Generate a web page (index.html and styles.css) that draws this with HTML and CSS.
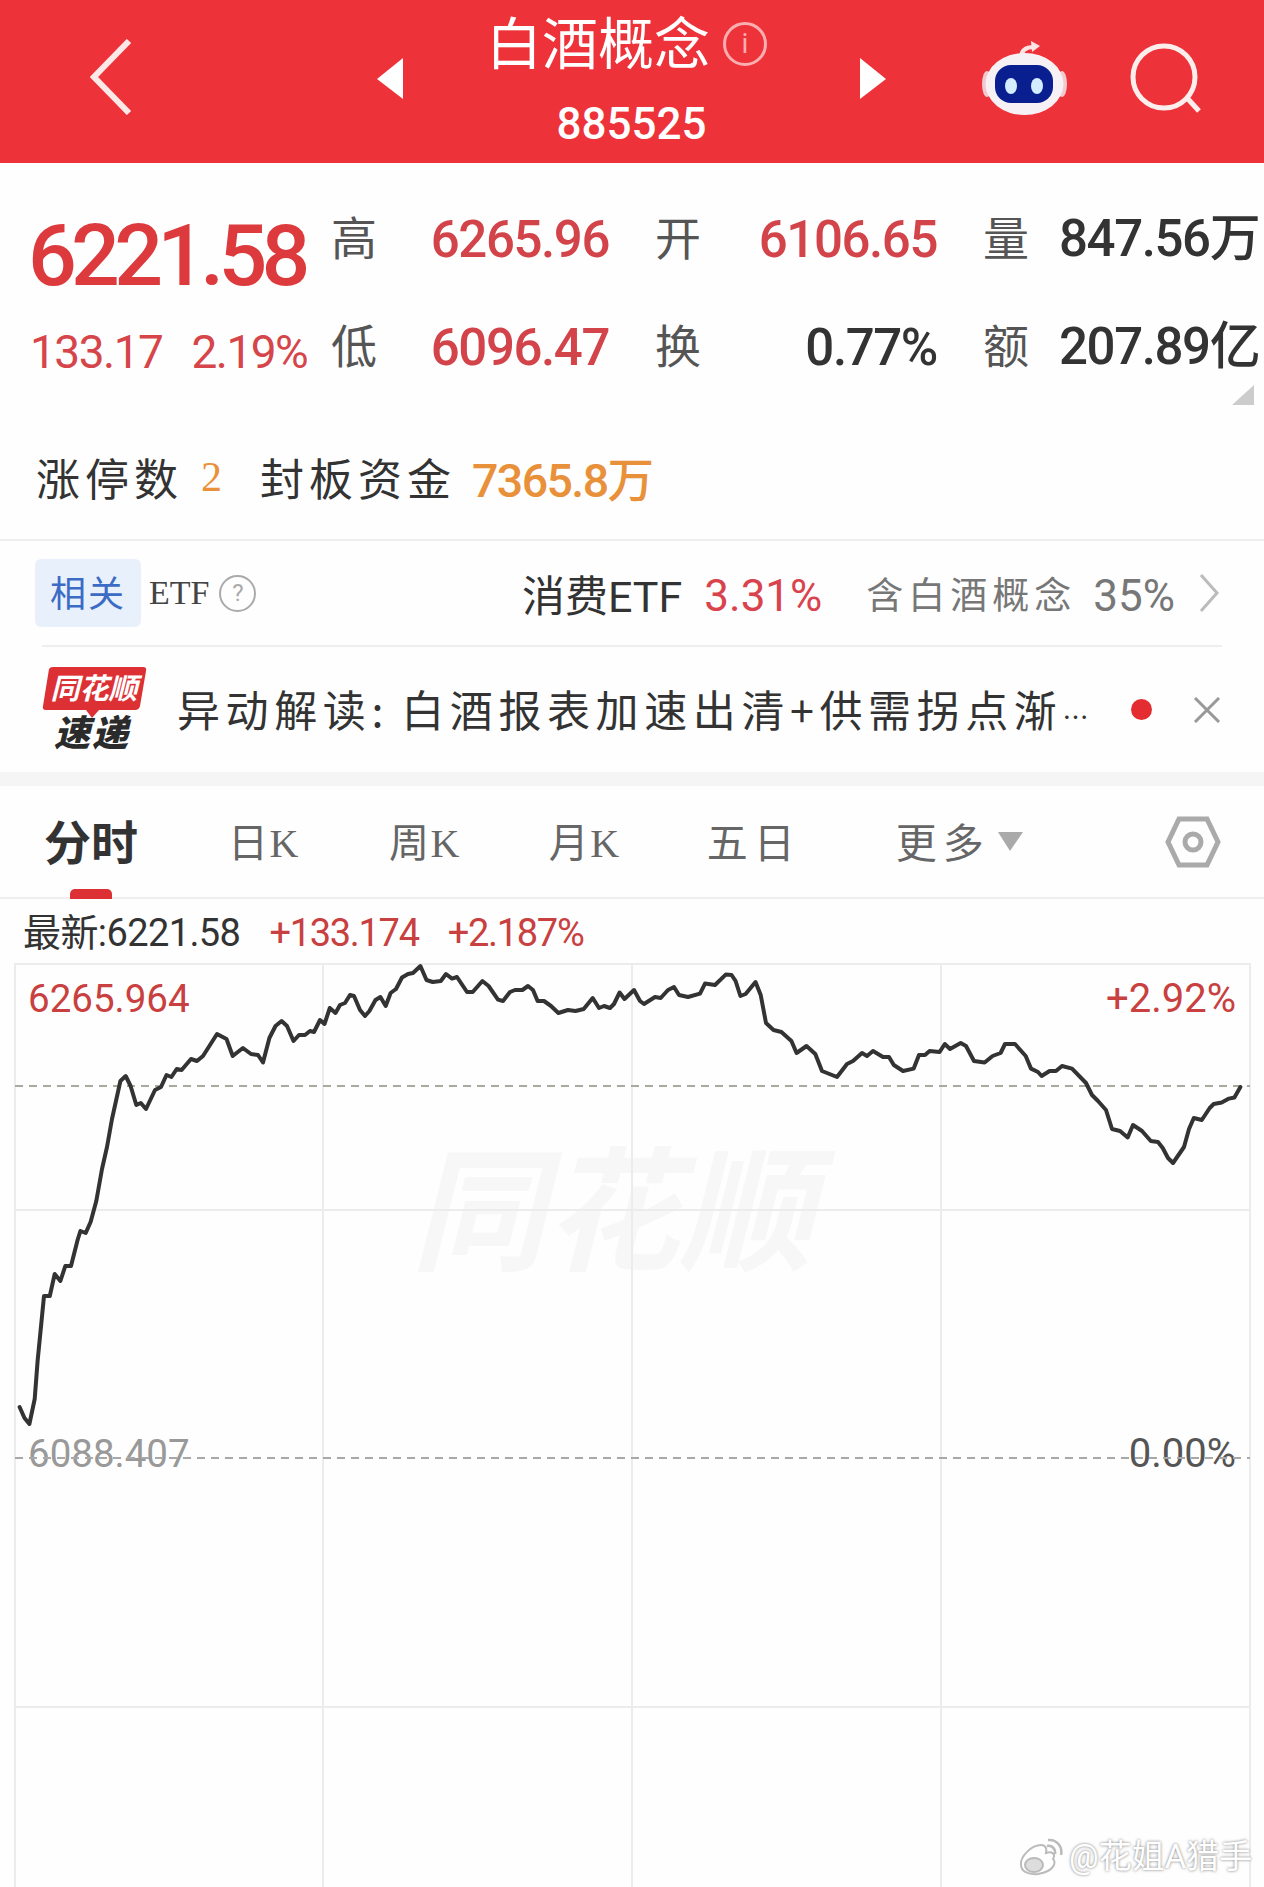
FILE: index.html
```html
<!DOCTYPE html>
<html lang="zh-CN">
<head>
    <meta charset="UTF-8">
    <meta name="viewport" content="width=device-width, initial-scale=1.0">
    <title>白酒概念 885525</title>
    <link rel="stylesheet" href="styles.css">
</head>
<body>
    <header class="topbar">
        <svg class="back" viewBox="0 0 42 76"><path d="M39 2 L4 38 L39 74" /></svg>
        <svg class="arrow arrow-prev" viewBox="0 0 26 41"><polygon points="26,0 0,21 26,41" /></svg>
        <div class="title-block">
            <div class="title-row">
                <span class="title">白酒概念</span>
                <span class="info">i</span>
            </div>
            <div class="code">885525</div>
        </div>
        <svg class="arrow arrow-next" viewBox="0 0 26 41"><polygon points="0,0 26,21 0,41" /></svg>
        <svg class="robot" viewBox="0 0 85 75">
            <path class="robot-antenna" d="M39 17 C39 9 44 6 52 6" />
            <polygon points="49,0 58,5 50,11" fill="#fde4e4" />
            <ellipse cx="5" cy="43" rx="5" ry="13" fill="#f2c9cf" />
            <ellipse cx="80" cy="43" rx="5" ry="13" fill="#f2c9cf" />
            <ellipse cx="42.500" cy="43" rx="39" ry="31" fill="#f6f1f4" />
            <rect x="13" y="24" width="58" height="38" rx="16" fill="#0a1f8f" />
            <ellipse cx="29" cy="45" rx="6" ry="8" fill="#d3ecff" />
            <ellipse cx="55" cy="45" rx="6" ry="8" fill="#d3ecff" />
        </svg>
        <svg class="search" viewBox="0 0 72 72">
            <circle cx="34" cy="34" r="31" />
            <path d="M58 56 L69 68" />
        </svg>
    </header>

    <section class="stats">
        <div class="quote">
            <div class="price">6221.58</div>
            <div class="change"><span>133.17</span><span>2.19%</span></div>
        </div>
        <div class="stat-grid">
            <span class="stat-label">高</span>
            <span class="stat-val red">6265.96</span>
            <span class="stat-label pad">开</span>
            <span class="stat-val red">6106.65</span>
            <span class="stat-label pad">量</span>
            <span class="stat-val end">847.56万</span>
            <span class="stat-label">低</span>
            <span class="stat-val red">6096.47</span>
            <span class="stat-label pad">换</span>
            <span class="stat-val">0.77%</span>
            <span class="stat-label pad">额</span>
            <span class="stat-val end">207.89亿</span>
        </div>
        <div class="corner"></div>
    </section>

    <section class="limit-row">
        <span class="limit-label">涨停数</span>
        <span class="limit-count">2</span>
        <span class="limit-label limit-fund">封板资金</span>
        <span class="limit-money">7365.8万</span>
    </section>

    <section class="etf-row">
        <span class="tag">相关</span>
        <span class="etf-name">ETF</span>
        <span class="help">?</span>
        <span class="etf-fund">消费ETF</span>
        <span class="etf-pct">3.31%</span>
        <span class="etf-note">含白酒概念</span>
        <span class="etf-share">35%</span>
        <svg class="chevron" viewBox="0 0 22 40"><path d="M3 2 L19 20 L3 38" /></svg>
    </section>

    <section class="news-row">
        <svg class="news-logo" viewBox="0 0 105 92">
            <path d="M7 3 Q8 1 11 1 L101 1 Q105 1 104 5 L98 40 Q97 44 93 44 L57 44 L50 52 L44 44 L4 44 Q0 44 1 40 Z" fill="#dc3035" />
            <text class="logo-top" x="52" y="33" text-anchor="middle">同花顺</text>
            <text class="logo-bottom" x="50" y="80" text-anchor="middle">速递</text>
        </svg>
        <div class="news-text">异动解读: 白酒报表加速出清+供需拐点渐<span class="news-more">…</span></div>
        <span class="news-dot"></span>
        <svg class="news-close" viewBox="0 0 28 26"><path d="M2 1 L26 25 M26 1 L2 25" /></svg>
    </section>

    <div class="gap"></div>

    <nav class="tabs">
        <span class="tab active">分时</span>
        <span class="tab tab-day">日<i>K</i></span>
        <span class="tab tab-week">周<i>K</i></span>
        <span class="tab tab-month">月<i>K</i></span>
        <span class="tab tab-five">五日</span>
        <span class="tab tab-more">更多</span>
        <svg class="more-arrow" viewBox="0 0 25 19"><polygon points="0,0 25,0 12,19" /></svg>
        <svg class="hex" viewBox="0 0 56 52">
            <polygon points="14,3 42,3 53,26 42,49 14,49 3,26" />
            <circle cx="28" cy="26" r="8" />
        </svg>
    </nav>

    <div class="latest">
        <span class="latest-now">最新:6221.58</span>
        <span class="latest-up">+133.174</span>
        <span class="latest-pct">+2.187%</span>
    </div>

    <section class="chart">
        <div class="watermark">同花顺</div>
        <span class="axis axis-high">6265.964</span>
        <span class="axis axis-pct axis-high-pct">+2.92%</span>
        <span class="axis axis-base">6088.407</span>
        <span class="axis axis-pct axis-base-pct">0.00%</span>
        <svg class="plot" viewBox="0 963 1264 924">
            <g class="grid">
                <path d="M15 963 V1887 M323 963 V1887 M632 963 V1887 M941 963 V1887 M1250 963 V1887" />
                <path d="M15 964 H1250 M15 1210 H1250 M15 1707 H1250" />
            </g>
            <path class="dash dash-high" d="M15 1086 H1250" />
            <path class="dash dash-base" d="M15 1458 H1250" />
            <polyline class="price-line" points="19.6,1407 24.5,1418 29.4,1424 34.7,1399 37.6,1361 44,1296 49.8,1296 54.7,1274 60.4,1281 65.3,1266 71,1266 77.6,1240 80.4,1231 85.7,1233 90.6,1222 96.3,1201 102,1169 107,1147 112,1119 120.4,1081 125.7,1076 130.6,1086 136.3,1105 140.8,1103 146,1109 155,1090 161,1087 166.5,1075 171.4,1077 176.7,1069 181.6,1070 191,1059 197,1061 203,1056 217,1034 226.5,1039 232.7,1056 242.9,1048 251,1054 258,1055 263,1062.5 269.4,1038 275.5,1026 281.6,1021 287,1026 293.5,1041 299,1035 305,1035 310,1031 314,1032 320,1020 324.5,1024 329.8,1008 335.5,1013 340,1005 345,1003 350,995 354,996 360,1010 365,1016 369.4,1011 375.5,1000 380.4,997 385.7,1006 390.6,993 396,989 402,977.5 408,974 413,973 420.4,966 426.5,980 432.7,982 440.8,981 446,974 452,978.6 457,977 467,992 472.7,992 482.4,981 488.6,986 498,999.6 503,1001 510,992 515,990 522.4,990 528,986 533,990 537.6,1001 544,1001 551,1006 558.4,1013 568,1010 575.5,1011 583.7,1009 592.7,998 599,1008 604,1006 610,1008 614,1004 619.6,992.5 624.5,999 634,990 640,1001 644,1004 655,997 660.7,998 668,990 674,987 679,995 688,997 700,993.6 705,983.6 715,985 725.7,974.6 731.6,975 735.6,981 740.4,996 745.6,994 755.5,982 760.7,995 766,1023 773.5,1030 781.4,1032 791.4,1041 796.6,1053 806.5,1046 815.3,1054 822,1071 837,1077 847,1064 853,1061 862,1053 867,1056 873,1051 883,1057 889,1057 893.8,1065 903,1071 913.7,1068.6 919,1055 925,1055 929.6,1051 939.6,1052 944.8,1044 950,1049 960.7,1043 966,1046 974,1061 984.6,1062.5 992.6,1056 1000.6,1053 1005,1044 1015,1044 1025.7,1056 1031,1068.6 1038,1072 1041.6,1076 1049.6,1071 1056,1071 1062,1066 1072,1068.6 1086,1083 1092,1095 1098,1101 1106,1110 1112,1129 1120,1131 1127.7,1137.5 1133,1125 1142,1131 1150.8,1141 1158,1142 1162.7,1148 1168,1158 1173,1163 1184,1147 1189,1129 1193.8,1118 1201.8,1120 1209.7,1108 1213.7,1104 1221.7,1102.5 1229,1098.6 1234.4,1097.5 1240.4,1087" />
        </svg>
        <div class="credit">
            <svg class="weibo" viewBox="0 0 46 38">
                <path class="weibo-body" d="M3 27 C2 18 14 7 23 7 C28 7 29 11 28 15 C34 13 38 16 35 21 C38 23 38 33 20 36 C10 37 3 33 3 27 Z" />
                <ellipse class="weibo-eye" cx="16" cy="27" rx="9" ry="7" />
                <path class="weibo-wave" d="M29 8 C34 7 38 11 37 16 M30 2 C38 1 45 8 43 17" />
            </svg>
            <span class="credit-name">@花姐A猎手</span>
        </div>
    </section>
</body>
</html>
```

FILE: styles.css
```css
* {
    box-sizing: border-box;
}
body {
    margin: 0;
    width: 1264px;
    height: 1887px;
    overflow: hidden;
    background: #fefefe;
    color: #333;
    font-family: Roboto, "Noto Sans CJK SC", sans-serif;
}

/* top bar */
.topbar {
    display: flex;
    align-items: center;
    height: 163px;
    padding: 0 0 6px 90px;
    background: #ee3239;
    color: #fff;
}
.back {
    width: 42px;
    height: 76px;
    margin-top: -4px;
    fill: none;
    stroke: #fde8e8;
    stroke-width: 6;
}
.arrow {
    width: 26px;
    height: 41px;
    fill: #fff;
}
.arrow-prev {
    margin-left: 245px;
}
.title-block {
    align-self: flex-start;
    width: 457px;
    padding-top: 15px;
    text-align: center;
}
.title-row {
    display: flex;
    justify-content: center;
    align-items: center;
    height: 60px;
    padding-right: 10px;
}
.title {
    font-size: 56px;
    line-height: 60px;
}
.info {
    width: 44px;
    height: 44px;
    margin: -3px 0 0 13px;
    border: 3px solid #f9aeb0;
    border-radius: 50%;
    color: #f9aeb0;
    font-size: 28px;
    line-height: 38px;
    text-align: center;
}
.code {
    margin-top: 26px;
    font-size: 44px;
    line-height: 46px;
    font-weight: 500;
}
.robot {
    width: 85px;
    height: 75px;
    margin-left: 96px;
}
.robot-antenna {
    fill: none;
    stroke: #fde4e4;
    stroke-width: 4;
}
.search {
    width: 72px;
    height: 72px;
    margin-left: 63px;
    fill: none;
    stroke: #fdeeee;
    stroke-width: 5;
}

/* quote block */
.stats {
    display: flex;
    position: relative;
    height: 241px;
    padding: 23px 0 0 28px;
}
.quote {
    flex: none;
    width: 303px;
    padding-top: 28px;
    color: #dd3a3e;
}
.price {
    font-size: 86px;
    line-height: 84px;
    letter-spacing: -5.800px;
    font-weight: 500;
}
.change {
    display: flex;
    gap: 29px;
    padding: 0 0 0 2px;
    font-size: 46px;
    line-height: 108px;
    letter-spacing: -1.500px;
    color: #d5454a;
}
.stat-grid {
    display: grid;
    grid-template-columns: 46px 232px 94px 234px 93px 238px;
    grid-auto-rows: 108px;
    align-items: center;
}
.stat-label {
    font-size: 46px;
    line-height: 60px;
    margin-top: -3px;
    color: #555;
}
.stat-label.pad {
    padding-left: 46px;
}
.stat-val {
    font-size: 51px;
    line-height: 60px;
    letter-spacing: -1.400px;
    font-weight: 500;
    color: #333;
    text-align: right;
    white-space: nowrap;
}
.stat-val.red {
    color: #d2434a;
}
.stat-val.end {
    padding-left: 29px;
    margin-top: -3px;
    text-align: left;
}
.corner {
    position: absolute;
    right: 10px;
    top: 222px;
    border-style: solid;
    border-width: 0 0 20px 22px;
    border-color: transparent transparent #ccc transparent;
}

/* limit up row */
.limit-row {
    display: flex;
    align-items: center;
    height: 137px;
    padding: 10px 0 0 36px;
    border-bottom: 2px solid #eee;
}
.limit-label {
    font-size: 44px;
    letter-spacing: 5px;
    color: #333;
}
.limit-count {
    margin-left: 18px;
    font-family: "Liberation Serif", serif;
    font-size: 42px;
    color: #e8913a;
}
.limit-fund {
    margin-left: 38px;
}
.limit-money {
    margin-left: 16px;
    font-size: 46.500px;
    letter-spacing: -1.600px;
    font-weight: 500;
    color: #e8913a;
}

/* etf row */
.etf-row {
    display: flex;
    align-items: center;
    height: 106px;
    margin: 0 42px;
    border-bottom: 2px solid #eee;
}
.tag {
    width: 106px;
    height: 68px;
    margin-left: -7px;
    border-radius: 6px;
    background: #e8f0fc;
    color: #3b6bc4;
    font-size: 36px;
    line-height: 72px;
    letter-spacing: 2px;
    text-align: center;
}
.etf-name {
    margin-left: 8px;
    font-family: "Liberation Serif", serif;
    font-size: 34px;
    color: #444;
}
.help {
    width: 37px;
    height: 37px;
    margin-left: 10px;
    border: 2px solid #aaa;
    border-radius: 50%;
    color: #aaa;
    font-size: 24px;
    line-height: 33px;
    text-align: center;
}
.etf-fund {
    margin-left: auto;
    font-size: 43px;
    color: #333;
}
.etf-pct {
    margin: 6px 0 0 22px;
    font-size: 44px;
    color: #d9434e;
}
.etf-note {
    margin-left: 44px;
    font-size: 37px;
    letter-spacing: 5px;
    color: #777;
}
.etf-share {
    margin: 6px 0 0 17px;
    font-size: 44px;
    color: #777;
}
.chevron {
    width: 22px;
    height: 40px;
    margin: 0 2px 0 23px;
    fill: none;
    stroke: #bbb;
    stroke-width: 3;
}

/* news row */
.news-row {
    display: flex;
    align-items: center;
    height: 125px;
    padding-left: 42px;
}
.news-logo {
    flex: none;
    width: 105px;
    height: 92px;
    margin-top: 5px;
}
.logo-top {
    fill: #fff;
    font-size: 29px;
    font-weight: 700;
    font-style: italic;
}
.logo-bottom {
    fill: #2b2b2b;
    font-size: 36px;
    font-weight: 900;
    font-style: italic;
    letter-spacing: 2px;
}
.news-text {
    flex: none;
    width: 913px;
    margin: -4px 0 0 30px;
    font-family: "Noto Sans CJK SC", sans-serif;
    font-size: 43px;
    letter-spacing: 5.600px;
    word-spacing: -3px;
    color: #333;
    white-space: nowrap;
}
.news-more {
    font-size: 26px;
    letter-spacing: 0;
}
.news-dot {
    flex: none;
    width: 21px;
    height: 21px;
    margin-left: 41px;
    border-radius: 50%;
    background: #e32d30;
}
.news-close {
    flex: none;
    width: 28px;
    height: 26px;
    margin-left: 41px;
    fill: none;
    stroke: #999;
    stroke-width: 3;
}
.gap {
    height: 14px;
    background: #f5f5f5;
}

/* period tabs */
.tabs {
    display: flex;
    align-items: center;
    position: relative;
    height: 113px;
    padding: 0 0 4px 44px;
    border-bottom: 2px solid #eee;
}
.tab {
    font-size: 40px;
    letter-spacing: 1.500px;
    color: #666;
    white-space: nowrap;
}
.tab i {
    font-family: "Liberation Serif", serif;
    font-style: normal;
}
.tab.active {
    position: relative;
    width: 93px;
    font-size: 47px;
    font-weight: 700;
    letter-spacing: 0;
    color: #333;
}
.tab.active::after {
    content: "";
    position: absolute;
    left: 26px;
    bottom: -25px;
    width: 42px;
    height: 10px;
    border-radius: 5px 5px 0 0;
    background: #dd3035;
}
.tab-day {
    margin-left: 91px;
}
.tab-week {
    margin-left: 89px;
}
.tab-month {
    margin-left: 88px;
}
.tab-five {
    margin-left: 86px;
    font-size: 41px;
    letter-spacing: 6px;
}
.tab-more {
    margin-left: 95px;
    font-size: 41px;
    letter-spacing: 6px;
}
.more-arrow {
    width: 25px;
    height: 19px;
    margin: 4px 0 0 8px;
    fill: #aaa;
}
.hex {
    position: absolute;
    left: 1165px;
    top: 30px;
    width: 56px;
    height: 52px;
    fill: none;
    stroke: #aaa;
    stroke-width: 5;
}

/* latest price line */
.latest {
    display: flex;
    align-items: baseline;
    height: 64px;
    padding: 4px 0 0 23px;
    font-size: 38px;
    line-height: 60px;
    letter-spacing: -.6px;
}
.latest-now {
    color: #333;
}
.latest-up {
    margin-left: 29px;
    letter-spacing: -1.300px;
    color: #c8403f;
}
.latest-pct {
    margin-left: 29px;
    letter-spacing: -1.300px;
    color: #c8403f;
}

/* chart */
.chart {
    position: relative;
    height: 924px;
}
.plot {
    position: absolute;
    left: 0;
    top: 0;
    width: 1264px;
    height: 924px;
}
.grid {
    fill: none;
    stroke: #ececec;
    stroke-width: 2;
}
.dash {
    fill: none;
    stroke-width: 2;
    stroke-dasharray: 8 6;
}
.dash-high {
    stroke: #aaa99c;
}
.dash-base {
    stroke: #a8a8a8;
}
.price-line {
    fill: none;
    stroke: #333;
    stroke-width: 4;
    stroke-linejoin: round;
    stroke-linecap: round;
}
.axis {
    position: absolute;
    font-size: 38.500px;
    line-height: 40px;
}
.axis-pct {
    font-size: 40px;
}
.axis-high {
    left: 28px;
    top: 16px;
    color: #c8403f;
}
.axis-high-pct {
    right: 28px;
    top: 16px;
    color: #c8403f;
}
.axis-base {
    left: 28px;
    top: 471px;
    color: #999;
}
.axis-base-pct {
    right: 28px;
    top: 471px;
    color: #555;
}
.watermark {
    position: absolute;
    left: 411px;
    top: 172px;
    font-size: 134px;
    line-height: 160px;
    font-weight: 700;
    font-style: italic;
    color: #f7f7f7;
    white-space: nowrap;
}
.credit {
    display: flex;
    align-items: center;
    position: absolute;
    left: 1018px;
    top: 875px;
}
.weibo {
    width: 46px;
    height: 38px;
}
.weibo-body {
    fill: #fff;
    stroke: #bbb;
    stroke-width: 2;
}
.weibo-eye {
    fill: #ddd;
    stroke: #bbb;
    stroke-width: 2;
}
.weibo-wave {
    fill: none;
    stroke: #bbb;
    stroke-width: 2.500;
}
.credit-name {
    margin-left: 5px;
    font-size: 33px;
    line-height: 38px;
    color: #fff;
    text-shadow: 0 0 3px rgba(0, 0, 0, .55);
    white-space: nowrap;
}
```
